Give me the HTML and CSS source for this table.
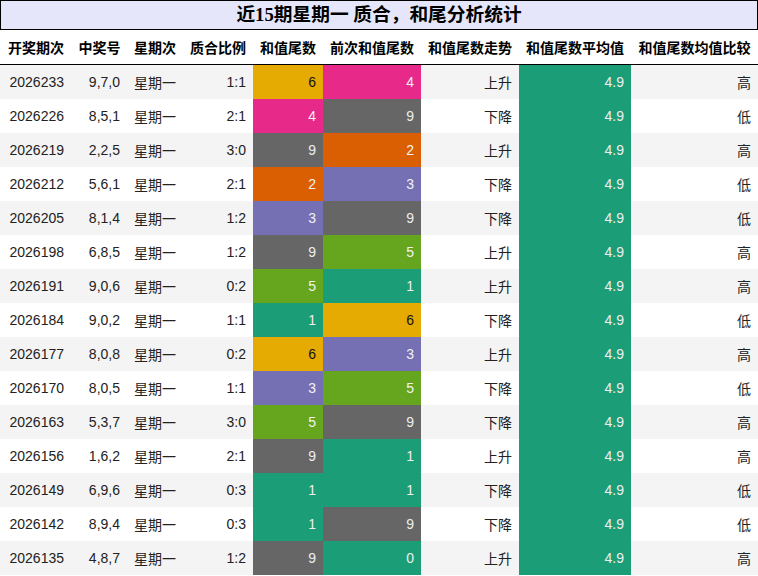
FILE: index.html
```html
<!DOCTYPE html>
<html lang="zh">
<head>
<meta charset="utf-8">
<title>近15期星期一 质合，和尾分析统计</title>
<link rel="stylesheet" href="styles.css">
</head>
<body>
<div class="title">近15期星期一 质合，和尾分析统计</div>
<table class="stats">
<colgroup>
<col class="w1"><col class="w2"><col class="w3"><col class="w4"><col class="w5"><col class="w6"><col class="w7"><col class="w8"><col class="w9">
</colgroup>
<thead>
<tr><th>开奖期次</th><th>中奖号</th><th>星期次</th><th>质合比例</th><th>和值尾数</th><th>前次和值尾数</th><th>和值尾数走势</th><th>和值尾数平均值</th><th>和值尾数均值比较</th></tr>
</thead>
<tbody>
<tr><td class="num">2026233</td><td class="num">9,7,0</td><td>星期一</td><td class="num">1:1</td><td class="num c-gold">6</td><td class="num c-pink">4</td><td class="num">上升</td><td class="num c-teal">4.9</td><td class="num">高</td></tr>
<tr><td class="num">2026226</td><td class="num">8,5,1</td><td>星期一</td><td class="num">2:1</td><td class="num c-pink">4</td><td class="num c-gray">9</td><td class="num">下降</td><td class="num c-teal">4.9</td><td class="num">低</td></tr>
<tr><td class="num">2026219</td><td class="num">2,2,5</td><td>星期一</td><td class="num">3:0</td><td class="num c-gray">9</td><td class="num c-orange">2</td><td class="num">上升</td><td class="num c-teal">4.9</td><td class="num">高</td></tr>
<tr><td class="num">2026212</td><td class="num">5,6,1</td><td>星期一</td><td class="num">2:1</td><td class="num c-orange">2</td><td class="num c-purple">3</td><td class="num">下降</td><td class="num c-teal">4.9</td><td class="num">低</td></tr>
<tr><td class="num">2026205</td><td class="num">8,1,4</td><td>星期一</td><td class="num">1:2</td><td class="num c-purple">3</td><td class="num c-gray">9</td><td class="num">下降</td><td class="num c-teal">4.9</td><td class="num">低</td></tr>
<tr><td class="num">2026198</td><td class="num">6,8,5</td><td>星期一</td><td class="num">1:2</td><td class="num c-gray">9</td><td class="num c-green">5</td><td class="num">上升</td><td class="num c-teal">4.9</td><td class="num">高</td></tr>
<tr><td class="num">2026191</td><td class="num">9,0,6</td><td>星期一</td><td class="num">0:2</td><td class="num c-green">5</td><td class="num c-teal">1</td><td class="num">上升</td><td class="num c-teal">4.9</td><td class="num">高</td></tr>
<tr><td class="num">2026184</td><td class="num">9,0,2</td><td>星期一</td><td class="num">1:1</td><td class="num c-teal">1</td><td class="num c-gold">6</td><td class="num">下降</td><td class="num c-teal">4.9</td><td class="num">低</td></tr>
<tr><td class="num">2026177</td><td class="num">8,0,8</td><td>星期一</td><td class="num">0:2</td><td class="num c-gold">6</td><td class="num c-purple">3</td><td class="num">上升</td><td class="num c-teal">4.9</td><td class="num">高</td></tr>
<tr><td class="num">2026170</td><td class="num">8,0,5</td><td>星期一</td><td class="num">1:1</td><td class="num c-purple">3</td><td class="num c-green">5</td><td class="num">下降</td><td class="num c-teal">4.9</td><td class="num">低</td></tr>
<tr><td class="num">2026163</td><td class="num">5,3,7</td><td>星期一</td><td class="num">3:0</td><td class="num c-green">5</td><td class="num c-gray">9</td><td class="num">下降</td><td class="num c-teal">4.9</td><td class="num">高</td></tr>
<tr><td class="num">2026156</td><td class="num">1,6,2</td><td>星期一</td><td class="num">2:1</td><td class="num c-gray">9</td><td class="num c-teal">1</td><td class="num">上升</td><td class="num c-teal">4.9</td><td class="num">高</td></tr>
<tr><td class="num">2026149</td><td class="num">6,9,6</td><td>星期一</td><td class="num">0:3</td><td class="num c-teal">1</td><td class="num c-teal">1</td><td class="num">下降</td><td class="num c-teal">4.9</td><td class="num">低</td></tr>
<tr><td class="num">2026142</td><td class="num">8,9,4</td><td>星期一</td><td class="num">0:3</td><td class="num c-teal">1</td><td class="num c-gray">9</td><td class="num">下降</td><td class="num c-teal">4.9</td><td class="num">低</td></tr>
<tr><td class="num">2026135</td><td class="num">4,8,7</td><td>星期一</td><td class="num">1:2</td><td class="num c-gray">9</td><td class="num c-teal">0</td><td class="num">上升</td><td class="num c-teal">4.9</td><td class="num">高</td></tr>
</tbody>
</table>
</body>
</html>
```

FILE: styles.css
```css
html, body {
  margin: 0;
  padding: 0;
  background: #ffffff;
}

body {
  width: 758px;
  font-family: "Liberation Sans", "Noto Sans CJK SC", sans-serif;
  font-size: 14px;
  color: #222222;
}

.title {
  box-sizing: border-box;
  height: 30px;
  border: 1px solid #000000;
  background: #e6e6fa;
  font-family: "Liberation Serif", "Noto Sans CJK SC", serif;
  font-size: 18.72px;
  font-weight: bold;
  line-height: 28px;
  text-align: center;
  color: #000000;
}

.stats {
  width: 758px;
  border-collapse: collapse;
  table-layout: fixed;
}

.w1 { width: 72px; }
.w2 { width: 55px; }
.w3 { width: 56px; }
.w4 { width: 70px; }
.w5 { width: 70px; }
.w6 { width: 98px; }
.w7 { width: 98px; }
.w8 { width: 112px; }
.w9 { width: 127px; }

.stats th {
  height: 34px;
  padding: 0;
  font-weight: bold;
  color: #000000;
  text-align: center;
  white-space: nowrap;
  border-bottom: 1px solid #000000;
}

.stats td {
  height: 34px;
  padding: 0 7px;
  text-align: left;
  white-space: nowrap;
}

.stats tbody tr:nth-child(odd) {
  background: #f4f4f4;
}

.stats td.num {
  text-align: right;
}

.stats td:first-child {
  padding-right: 8px;
}

.c-gold { background: #e6ab02; color: #111111; }
.c-pink { background: #e7298a; color: #f2f2f2; }
.c-gray { background: #666666; color: #eeeeee; }
.c-orange { background: #d95f02; color: #f2f2f2; }
.c-purple { background: #7570b3; color: #f2f2f2; }
.c-green { background: #66a61e; color: #f2f2f2; }
.c-teal { background: #1b9e77; color: #eeeeee; }
```
